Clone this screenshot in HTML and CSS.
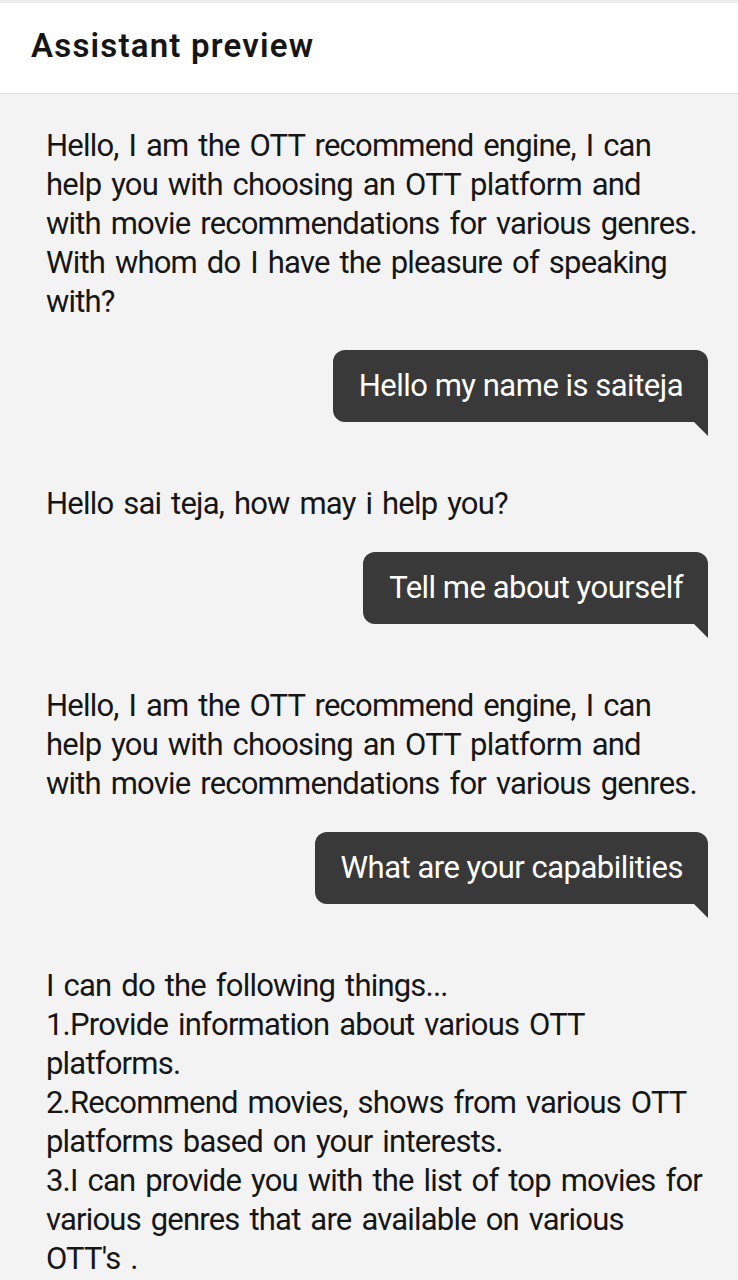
FILE: index.html
```html
<!DOCTYPE html>
<html>
<head>
<meta charset="utf-8">
<link rel="stylesheet" href="styles.css">
</head>
<body>
<header class="header">
  <h1 class="title">Assistant preview</h1>
</header>
<main class="chat">
  <div class="bot">Hello, I am the OTT recommend engine, I can help you with choosing an OTT platform and with movie recommendations for various genres. With whom do I have the pleasure of speaking with?</div>
  <div class="user"><span class="bubble">Hello my name is saiteja</span></div>
  <div class="bot">Hello sai teja, how may i help you?</div>
  <div class="user"><span class="bubble">Tell me about yourself</span></div>
  <div class="bot">Hello, I am the OTT recommend engine, I can help you with choosing an OTT platform and with movie recommendations for various genres.</div>
  <div class="user"><span class="bubble">What are your capabilities</span></div>
  <div class="bot">I can do the following things...<br>1.Provide information about various OTT platforms.<br>2.Recommend movies, shows from various OTT platforms based on your interests.<br>3.I can provide you with the list of top movies for various genres that are available on various OTT's .</div>
</main>
</body>
</html>
```
FILE: styles.css
```css
* { box-sizing: border-box; }
html, body { margin: 0; padding: 0; }
body {
  background: #f3f3f3;
  font-family: Roboto, "Noto Sans", sans-serif;
  color: #161616;
  width: 738px;
  height: 1280px;
  overflow: hidden;
}
.header {
  background: #ffffff;
  height: 94px;
  border-top: 3px solid #ececec;
  border-bottom: 1px solid #e0e0e0;
  display: flex;
  align-items: center;
  padding: 0 0 6px 31px;
}
.title {
  margin: 0;
  font-size: 33px;
  font-weight: 600;
  color: #161616;
  letter-spacing: 1.2px;
}
.chat {
  display: flex;
  flex-direction: column;
  padding: 32px 30px 0 46px;
}
.bot {
  font-size: 31px;
  line-height: 39px;
  letter-spacing: -0.8px;
  word-spacing: 3px;
  max-width: 657px;
  margin-bottom: 29px;
}
.user {
  display: flex;
  justify-content: flex-end;
  margin-bottom: 62px;
}
.bubble {
  position: relative;
  background: #393939;
  color: #ffffff;
  font-size: 31px;
  line-height: 40px;
  letter-spacing: -0.5px;
  padding: 16px 25px 16px 26px;
  border-radius: 12px 12px 0 12px;
}
.bubble::after {
  content: "";
  position: absolute;
  right: 0;
  top: 100%;
  border-top: 14px solid #393939;
  border-left: 14px solid transparent;
}
```
